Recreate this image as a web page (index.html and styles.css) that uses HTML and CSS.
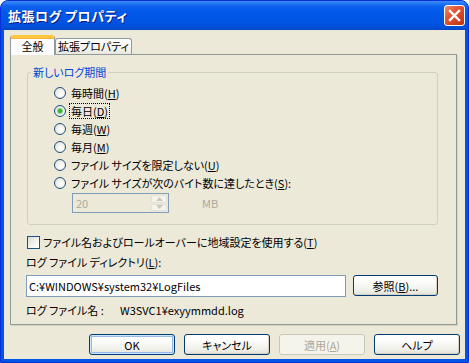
FILE: index.html
```html
<!DOCTYPE html>
<html lang="ja">
<head>
    <meta charset="UTF-8">
    <title>拡張ログ プロパティ</title>
    <link rel="stylesheet" href="styles.css">
</head>
<body>
    <div class="window">
        <div class="titlebar">
            <span class="title">拡張ログ プロパティ</span>
            <span class="close">
                <svg width="21" height="21" viewBox="0 0 21 21">
                    <path d="M6 6 L15 15 M15 6 L6 15" stroke="#fff" stroke-width="2.4" stroke-linecap="square"/>
                </svg>
            </span>
        </div>
        <div class="client">
            <div class="tabs">
                <div class="tab active">全般</div>
                <div class="tab">拡張プロパティ</div>
            </div>
            <div class="panel">
                <fieldset class="group">
                    <legend>新しいログ期間</legend>
                    <div class="option"><span class="radio"></span><span class="label">毎時間(<u>H</u>)</span></div>
                    <div class="option"><span class="radio checked"></span><span class="label focus">毎日(<u>D</u>)</span></div>
                    <div class="option"><span class="radio"></span><span class="label">毎週(<u>W</u>)</span></div>
                    <div class="option"><span class="radio"></span><span class="label">毎月(<u>M</u>)</span></div>
                    <div class="option"><span class="radio"></span><span class="label">ファイル サイズを限定しない(<u>U</u>)</span></div>
                    <div class="option"><span class="radio"></span><span class="label">ファイル サイズが次のバイト数に達したとき(<u>S</u>):</span></div>
                    <div class="size-row">
                        <div class="spin">
                            <span class="spin-value">20</span>
                            <span class="spin-buttons">
                                <span class="spin-btn"><svg width="7" height="4" viewBox="0 0 7 4"><path d="M3.5 0 L7 4 L0 4 Z" fill="#c9c7ba"/></svg></span>
                                <span class="spin-btn"><svg width="7" height="4" viewBox="0 0 7 4"><path d="M0 0 L7 0 L3.5 4 Z" fill="#c9c7ba"/></svg></span>
                            </span>
                        </div>
                        <span class="unit">MB</span>
                    </div>
                </fieldset>

                <div class="check-row">
                    <span class="checkbox"></span>
                    <span class="label">ファイル名およびロールオーバーに地域設定を使用する(<u>T</u>)</span>
                </div>

                <div class="field-label">ログ ファイル ディレクトリ(<u>L</u>):</div>
                <div class="dir-row">
                    <div class="textbox">C:¥WINDOWS¥system32¥LogFiles</div>
                    <button class="btn browse">参照(<u>B</u>)...</button>
                </div>

                <div class="name-row">
                    <span class="name-label">ログ ファイル名 :</span>
                    <span>W3SVC1¥exyymmdd.log</span>
                </div>
            </div>

            <div class="buttons">
                <button class="btn default">OK</button>
                <button class="btn">キャンセル</button>
                <button class="btn disabled">適用(<u>A</u>)</button>
                <button class="btn">ヘルプ</button>
            </div>
        </div>
    </div>
</body>
</html>
```

FILE: styles.css
```css
html {
    background: #fff;
}
body {
    margin: 0;
    font-family: "Noto Sans CJK JP", sans-serif;
    font-size: 11px;
    font-feature-settings: "palt" 1;
    color: #000;
}
u {
    text-decoration: underline;
    text-underline-offset: 1px;
}
.window {
    width: 469px;
    height: 363px;
    box-sizing: border-box;
    background: #0055e5;
    border: 1px solid #0831d9;
    border-radius: 8px 8px 0 0;
    display: flex;
    flex-direction: column;
}
.titlebar {
    height: 29px;
    display: flex;
    align-items: center;
    justify-content: space-between;
    padding: 0 3px 0 7px;
    border-radius: 7px 7px 0 0;
    background: linear-gradient(to bottom, #3d8bf5 0, #2a7cf4 2px, #0d62ee 5px, #0058e8 12px, #0055e4 20px, #004fd8 26px, #0046c6 29px);
}
.title {
    color: #fff;
    font-weight: bold;
    font-size: 13px;
    text-shadow: 1px 1px 0 #0a1883;
    letter-spacing: 0.5px;
}
.close {
    width: 21px;
    height: 21px;
    box-sizing: border-box;
    border: 1px solid #fff;
    border-radius: 3px;
    background: linear-gradient(135deg, #f08a6c 0%, #e2593a 35%, #cf3e1c 75%, #b8300f 100%);
    display: flex;
    align-items: center;
    justify-content: center;
}
.close svg {
    margin: -1px;
}
.client {
    flex: 1;
    margin: 0 3px 3px 3px;
    background: #ece9d8;
    padding: 5px 5px 0 6px;
    display: flex;
    flex-direction: column;
}

/* tabs */
.tabs {
    display: flex;
    align-items: flex-end;
    height: 19px;
    position: relative;
    z-index: 1;
}
.tab {
    height: 16px;
    box-sizing: border-box;
    border: 1px solid #919b9c;
    border-bottom: none;
    border-radius: 3px 3px 0 0;
    background: linear-gradient(to bottom, #fff, #f3f2ed 70%, #e8e6dd);
    padding: 0;
    width: 77px;
    line-height: 15px;
    text-align: center;
    white-space: nowrap;
}
.tab.active {
    width: 45px;
    height: 20px;
    margin-bottom: -1px;
    background: #fcfcfe;
    border-top: 3px solid #ffc83c;
    box-shadow: inset 0 1px 0 #f7b53a;
    line-height: 16px;
}
.panel {
    height: 271px;
    box-sizing: border-box;
    margin-right: 3px;
    border: 1px solid #919b9c;
    background: #ece9d8;
    box-shadow: 1px 1px 0 #d6d3c3;
    padding: 0 0 0 15px;
    display: flex;
    flex-direction: column;
}

/* group box */
.group {
    margin: 10px 0 0 1px;
    width: 411px;
    box-sizing: border-box;
    border: 1px solid #d0d0bf;
    border-radius: 3px;
    padding: 5px 0 11px 26px;
    min-width: 0;
}
.group legend {
    color: #0046d5;
    line-height: 14px;
    padding: 0 2px;
    margin-left: -23px;
}
.option {
    height: 18px;
    display: flex;
    align-items: center;
}
.radio {
    width: 12px;
    height: 12px;
    box-sizing: border-box;
    border: 1px solid #1c5180;
    border-radius: 50%;
    background: radial-gradient(circle at 60% 60%, #fff 0, #f3f2ec 45%, #d8d5c6 100%);
    margin-right: 3px;
    display: flex;
    align-items: center;
    justify-content: center;
    flex: none;
}
.radio.checked::after {
    content: "";
    width: 4px;
    height: 4px;
    border-radius: 50%;
    background: #36b134;
    box-shadow: 0 0 0 1px #7fd57a;
}
.label {
    padding: 0 1px;
    border: 1px dotted transparent;
    line-height: 14px;
    white-space: nowrap;
}
.label.focus {
    border-color: #000;
}
.size-row {
    display: flex;
    align-items: center;
    margin-top: 1px;
    padding-left: 18px;
}
.spin {
    width: 97px;
    height: 20px;
    box-sizing: border-box;
    border: 1px solid #7f9db9;
    background: #ece9d8;
    display: flex;
    justify-content: space-between;
}
.spin-value {
    color: #aca899;
    padding-left: 3px;
    line-height: 18px;
}
.spin-buttons {
    width: 16px;
    display: flex;
    flex-direction: column;
    gap: 1px;
    padding: 1px 1px 1px 0;
}
.spin-btn {
    flex: 1;
    background: #f4f3ee;
    border: 1px solid #e3e1d6;
    border-radius: 2px;
    display: flex;
    align-items: center;
    justify-content: center;
}
.unit {
    color: #aca899;
    margin-left: 33px;
}

/* lower fields */
.check-row {
    display: flex;
    align-items: center;
    height: 16px;
    margin-top: 9px;
    padding-left: 1px;
}
.checkbox {
    width: 13px;
    height: 13px;
    box-sizing: border-box;
    border: 1px solid #1c5180;
    background: linear-gradient(135deg, #dcdcd7 0%, #f4f4f0 60%, #fff 100%);
    margin-right: 1px;
    flex: none;
}
.field-label {
    line-height: 16px;
    margin-top: 4px;
}
.dir-row {
    display: flex;
    align-items: flex-start;
    margin-top: 5px;
}
.textbox {
    width: 320px;
    height: 22px;
    box-sizing: border-box;
    border: 1px solid #7f9db9;
    background: #fff;
    padding-left: 2px;
    line-height: 20px;
}
.name-row {
    display: flex;
    line-height: 16px;
    margin-top: 5px;
}
.name-label {
    width: 94px;
}

/* buttons */
.btn {
    font: inherit;
    font-feature-settings: "palt" 1;
    color: #000;
    height: 21px;
    box-sizing: border-box;
    border: 1px solid #003c74;
    border-radius: 3px;
    background: linear-gradient(to bottom, #fff 0, #fcfcfb 30%, #f0f0ea 75%, #e3e1d8 100%);
    box-shadow: inset -1px -1px 0 #d6d0c5;
    padding: 0;
    line-height: 18px;
}
.btn.browse {
    width: 85px;
    margin-left: 7px;
}
.buttons {
    display: flex;
    justify-content: flex-end;
    gap: 9px;
    margin-top: 9px;
}
.buttons .btn {
    width: 86px;
}
.btn.default {
    box-shadow: inset 0 0 0 1px #cee7ff, inset 0 0 0 2px #98b8ea;
}
.btn.disabled {
    border-color: #c9c7ba;
    background: #f5f4ea;
    box-shadow: none;
    color: #aca899;
}
```
